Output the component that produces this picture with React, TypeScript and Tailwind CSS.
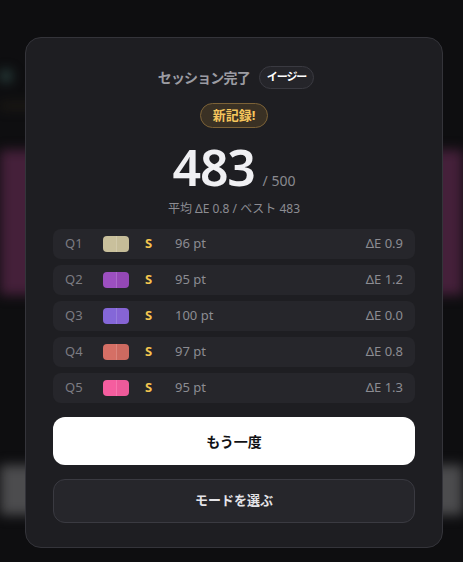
const rows = [
  { q: "Q1", a: "#c9c09c", b: "#c5bc98", pt: 96, de: "0.9" },
  { q: "Q2", a: "#9c4fc0", b: "#9548b6", pt: 95, de: "1.2" },
  { q: "Q3", a: "#8467d8", b: "#8664d4", pt: 100, de: "0.0" },
  { q: "Q4", a: "#d56f65", b: "#cd6a60", pt: 97, de: "0.8" },
  { q: "Q5", a: "#f55d9f", b: "#ee5a9a", pt: 95, de: "1.3" },
];

export default function App() {
  return (
    <div
      className="relative h-[562px] w-full overflow-hidden bg-[#0e0e10]"
      style={{ fontFamily: '"Noto Sans", "Noto Sans CJK JP", sans-serif' }}
    >
      {/* blurred page behind the modal */}
      <div className="flex flex-col blur-[6px]">
        <div className="h-[68px]" />
        <div className="flex h-[16px] items-center">
          <div className="h-[12px] w-[12px] rounded-full bg-[#2f4a48]" />
        </div>
        <div className="h-[20px]" />
        <div className="h-[4px] w-[60px] bg-[#2a2418]" />
        <div className="h-[42px]" />
        <div className="h-[145px] bg-[#45203a]" />
        <div className="h-[170px]" />
        <div className="h-[50px] bg-[#4c4c4e]" />
      </div>

      {/* result modal */}
      <div className="absolute inset-0 flex justify-center pt-[37px] pl-[25px] pr-[20px]">
        <div className="flex h-[511px] w-full flex-col items-center rounded-[16px] border border-[#34343a] bg-[#1e1e22] px-[27px] pt-[28px]">
          <div className="flex items-center gap-[9px] pl-[4px]">
            <span className="text-[14px] font-semibold tracking-[-0.06em] text-[#9c9ca2]">
              セッション完了
            </span>
            <span className="flex h-[23px] items-center rounded-full border border-[#3a3a41] bg-[#25252a] px-[7px] text-[11px] font-bold tracking-[-0.1em] text-white">
              イージー
            </span>
          </div>

          <div className="mt-[14px] flex h-[25px] items-center rounded-full border border-[#7c6237] bg-[#3a3124] px-[12px] text-[13px] font-bold text-[#f6c65c]">
            新記録!
          </div>

          <div className="mt-[14px] flex items-baseline gap-[8px]">
            <span className="text-[50px] font-semibold leading-none tracking-tight text-[#f0f0f3]">
              483
            </span>
            <span className="text-[14px] text-[#8a8a90]">/ 500</span>
          </div>

          <div className="mt-[8px] text-[12px] text-[#8c8c92]">
            平均 ΔE 0.8 / ベスト 483
          </div>

          <div className="mt-[11px] flex w-full flex-col gap-[6px]">
            {rows.map((r) => (
              <div
                key={r.q}
                className="flex h-[30px] items-center rounded-[8px] bg-[#26262b] pl-[12px] pr-[12px] text-[13px]"
              >
                <span className="w-[38px] text-[#7c7c82]">{r.q}</span>
                <div className="flex h-[16px] w-[26px] overflow-hidden rounded-[4px]">
                  <div
                    className="h-full flex-1 border-r border-white/15"
                    style={{ backgroundColor: r.a }}
                  />
                  <div className="h-full flex-1" style={{ backgroundColor: r.b }} />
                </div>
                <span className="ml-[16px] w-[30px] font-bold text-[#f4c44f]">S</span>
                <span className="text-[#8c8c92]">{r.pt} pt</span>
                <span className="ml-auto text-[#8c8c92]">ΔE {r.de}</span>
              </div>
            ))}
          </div>

          <button className="mt-[14px] flex h-[48px] w-full items-center justify-center rounded-[12px] bg-white text-[14px] font-semibold text-[#111114]">
            もう一度
          </button>
          <button className="mt-[14px] flex h-[44px] w-full items-center justify-center rounded-[12px] border border-[#3a3a41] bg-[#26262b] text-[13px] font-bold text-[#e4e4e8]">
            モードを選ぶ
          </button>
        </div>
      </div>
    </div>
  );
}
